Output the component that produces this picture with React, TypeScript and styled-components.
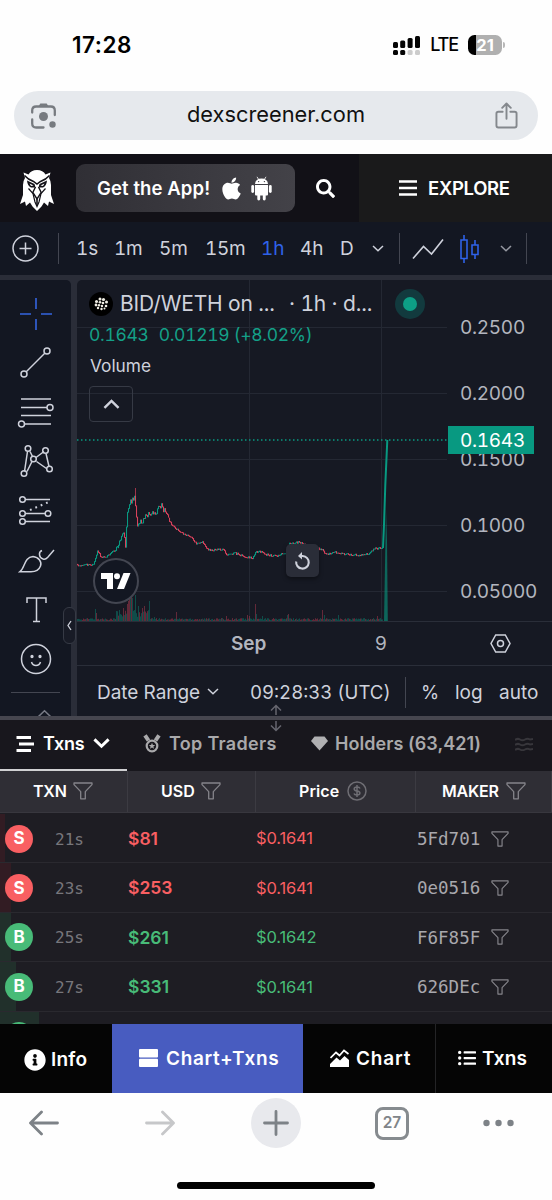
import React from "react";
import styled, { createGlobalStyle } from "styled-components";
import { FaApple, FaSearch, FaInfoCircle, FaListUl } from "react-icons/fa";

const ui = `Inter, "Liberation Sans", sans-serif`;

const GlobalStyle = createGlobalStyle`
  * { box-sizing: border-box; }
  body { margin: 0; background: #fff; font-family: ${ui}; }
  svg { display: block; flex: none; }
`;

const Phone = styled.div`
  width: 552px;
  height: 1200px;
  display: flex;
  flex-direction: column;
  overflow: hidden;
  background: #fefefe;
`;

/* ---------- text ---------- */
const Label = styled.span<{ $size: number; $weight?: number; $color?: string; $ls?: number }>`
  font-size: ${(p) => p.$size}px;
  font-weight: ${(p) => p.$weight ?? 400};
  color: ${(p) => p.$color ?? "#cfd2dc"};
  letter-spacing: ${(p) => p.$ls ?? 0}px;
  line-height: 1;
  white-space: nowrap;
`;
const Figure = styled(Label)`
  font-variant-numeric: tabular-nums;
`;
const PairName = styled(Figure)<{ $w: number }>`
  width: ${(p) => p.$w}px;
`;
const Mono = styled(Label)`
  font-family: "DejaVu Sans Mono", monospace;
  padding-top: 2px;
`;

/* ---------- phone status and address ---------- */
const StatusBar = styled.div`
  height: 91px;
  padding: 0 47px 1px 72px;
  display: flex;
  align-items: center;
  justify-content: space-between;
`;
const StatusRight = styled.div`
  display: flex;
  align-items: center;
  gap: 10px;
`;
const Battery = styled.div`
  width: 34px;
  height: 20px;
  border-radius: 6.5px;
  background: linear-gradient(90deg, #000 0 8px, #b0b0b0 8px);
  display: flex;
  align-items: center;
  justify-content: center;
`;
const BatteryGroup = styled.div`
  display: flex;
  align-items: center;
  gap: 1px;
`;
const Nub = styled.div`
  width: 2px;
  height: 6px;
  border-radius: 0 2px 2px 0;
  background: #b8b8b8;
`;
const AddressBar = styled.div`
  height: 49px;
  margin: 0 14px 14px;
  padding: 0 20px 1px 16px;
  border-radius: 25px;
  background: #e6e9ed;
  display: flex;
  align-items: center;
  justify-content: space-between;
`;

/* ---------- site header ---------- */
const SiteHeader = styled.header`
  height: 68px;
  display: flex;
  background: #121117;
  align-items: stretch;
`;
const LogoBox = styled.div`
  width: 76px;
  padding: 4px 0 0 20px;
  display: flex;
  align-items: center;
`;
const AppButton = styled.div`
  width: 219px;
  height: 48px;
  margin-top: 10px;
  padding-left: 21px;
  border-radius: 9px;
  background: linear-gradient(90deg, #302f35, #434248);
  display: flex;
  align-items: center;
`;
const Stores = styled.div`
  display: flex;
  align-items: center;
  gap: 7px;
  margin-left: 9px;
`;
const SearchBox = styled.div`
  width: 64px;
  display: flex;
  align-items: center;
  padding-left: 21px;
`;
const Explore = styled.div`
  flex: 1;
  background: #1a1a1b;
  display: flex;
  align-items: center;
  padding-left: 40px;
  gap: 11px;
`;

/* ---------- chart ---------- */
const ChartToolbar = styled.div`
  height: 53px;
  background: #131722;
  display: grid;
  align-items: center;
  grid-template-columns: 58px 18px 38px 45px 46px 56px 39px 40px 32px 27px 13px 48px 40px 26px 1fr;
`;
const VRule = styled.div<{ $h?: number }>`
  width: 1px;
  height: ${(p) => p.$h ?? 31}px;
  background: #434651;
`;
const Pad = styled.div`
  padding-left: 12px;
`;
const ChartArea = styled.div`
  height: 441px;
  padding-top: 5px;
  background: #2a2d38;
  display: flex;
  gap: 6px;
`;
const ToolColumn = styled.div`
  position: relative;
  width: 71px;
  padding-top: 9px;
  border-radius: 0 5px 0 0;
  background: #131722;
  display: flex;
  flex-direction: column;
  align-items: center;
`;
const ToolCell = styled.div`
  height: 49.4px;
  display: flex;
  align-items: center;
  flex: none;
`;
const ToolRule = styled.div`
  width: 49px;
  height: 1px;
  margin: 8px 0 16px;
  background: #434651;
  flex: none;
`;
const MoreTools = styled.div`
  padding-left: 18px;
  height: 7px;
  overflow: hidden;
`;
const DrawerHandle = styled.div`
  position: absolute;
  left: 63px;
  top: 327px;
  width: 13px;
  height: 37px;
  border: 1px solid #363a45;
  border-radius: 6px;
  background: #181b26;
  display: flex;
  align-items: center;
  justify-content: center;
`;
const ChartPanel = styled.div`
  width: 475px;
  border-radius: 5px 0 0 0;
  background: #161923;
  overflow: hidden;
`;
const Plot = styled.div`
  height: 342px;
  display: flex;
  border-bottom: 1px solid #2a2e39;
`;
const PlotCanvas = styled.div`
  position: relative;
  width: 370px;
  height: 341px;
`;
const Legend = styled.div`
  position: absolute;
  left: 0;
  top: 0;
  width: 370px;
  padding: 8px 0 0 12px;
`;
const LegendRow = styled.div<{ $h: number; $gap?: number; $pad?: number }>`
  display: flex;
  align-items: center;
  height: ${(p) => p.$h}px;
  gap: ${(p) => p.$gap ?? 0}px;
  padding-left: ${(p) => p.$pad ?? 0}px;
`;
const CollapseButton = styled.div`
  width: 44px;
  height: 36px;
  margin: 5px 0 0 0;
  border: 1px solid #363a45;
  border-radius: 4px;
  display: flex;
  align-items: center;
  justify-content: center;
`;
const TvBadge = styled.div`
  position: absolute;
  left: 16px;
  top: 278px;
  width: 46px;
  height: 46px;
  border: 2px solid #434651;
  border-radius: 50%;
  background: #131722;
  display: flex;
  align-items: center;
  justify-content: center;
`;
const ResetButton = styled.div`
  position: absolute;
  left: 209px;
  top: 264px;
  width: 33px;
  height: 33px;
  border-radius: 5px;
  background: #2a2d38;
  box-shadow: 0 2px 4px #0006;
  display: flex;
  align-items: center;
  justify-content: center;
`;
const PriceAxis = styled.div`
  position: relative;
  width: 105px;
  height: 340px;
  padding: 14px 0 0 13px;
`;
const PriceTick = styled.div`
  height: 66px;
  display: flex;
  align-items: center;
`;
const LastPrice = styled.div`
  position: absolute;
  left: 1px;
  top: 146px;
  width: 86px;
  height: 28px;
  padding-left: 12px;
  background: #089981;
  display: flex;
  align-items: center;
`;
const TimeAxis = styled.div`
  height: 44px;
  border-bottom: 1px solid #2a2e39;
  display: grid;
  grid-template-columns: 154px 144px 115px 1fr;
  align-items: center;
`;
const SepLabel = styled(Label)`
  grid-column: 2;
`;
const RangeRow = styled.div`
  height: 52px;
  display: grid;
  grid-template-columns: 110px 43px 155px 16px 34px 44px 1fr;
  align-items: center;
  padding-left: 20px;
`;
const Splitter = styled.div`
  position: relative;
  height: 4px;
  background: #46464f;
`;
const SplitGrip = styled.div`
  position: absolute;
  left: 269px;
  top: -12px;
  z-index: 2;
`;

/* ---------- transactions ---------- */
const TabRow = styled.div`
  height: 51px;
  background: #18171d;
  display: grid;
  grid-template-columns: 127px 184px 204px 1fr;
`;
const Tab = styled.div<{ $active?: boolean; $pad?: number; $gap: number }>`
  display: flex;
  align-items: center;
  gap: ${(p) => p.$gap}px;
  padding-left: ${(p) => p.$pad ?? 0}px;
  padding-bottom: ${(p) => (p.$active ? 2 : 4)}px;
  border-bottom: ${(p) => (p.$active ? "2px solid #d0d0d2" : "0")};
`;
const TableHead = styled.div`
  height: 42px;
  background: #2f2e35;
  border-bottom: 1px solid #38373e;
  display: grid;
  grid-template-columns: 128px 128px 160px 136px;
`;
const HeadCell = styled.div<{ $pad: number; $gap?: number }>`
  display: flex;
  align-items: center;
  gap: ${(p) => p.$gap ?? 6}px;
  padding-left: ${(p) => p.$pad}px;
  padding-bottom: 2px;
  border-right: 1px solid #3c3b42;
`;
const Rows = styled.div`
  height: 211px;
  padding-top: 1px;
  overflow: hidden;
  background: #1e1d23;
`;
const TxnRow = styled.div<{ $bar: number; $tint: string }>`
  height: 49.4px;
  border-bottom: 1px solid #2a292f;
  background: linear-gradient(${(p) => p.$tint}, ${(p) => p.$tint}) 0 0 / ${(p) => p.$bar}px 100% no-repeat;
  display: grid;
  grid-template-columns: 50px 73px 128px 161px 1fr;
  padding: 1px 0 0 5px;
  align-items: center;
`;
const Side = styled.div<{ $color: string }>`
  width: 28px;
  height: 28px;
  border-radius: 50%;
  background: ${(p) => p.$color};
  display: flex;
  align-items: center;
  justify-content: center;
`;
const Maker = styled.div`
  display: flex;
  align-items: center;
  gap: 11px;
`;

/* ---------- bottom bars ---------- */
const ViewTabs = styled.div`
  height: 68.5px;
  background: #050505;
  display: grid;
  grid-template-columns: 112px 191px 132px 1fr;
`;
const ViewTab = styled.div<{ $active?: boolean; $pad: number; $gap: number; $rule?: boolean; $top?: number }>`
  display: flex;
  align-items: center;
  gap: ${(p) => p.$gap}px;
  padding-left: ${(p) => p.$pad}px;
  padding-top: ${(p) => p.$top ?? 0}px;
  background: ${(p) => (p.$active ? "#485cc0" : "transparent")};
  border-left: ${(p) => (p.$rule ? "1px solid #242426" : "0")};
`;
const BrowserBar = styled.div`
  height: 61px;
  display: grid;
  grid-template-columns: 116px 106px 124px 108px 1fr;
  align-items: center;
  padding-left: 29px;
`;
const NewTab = styled.div`
  width: 50px;
  height: 50px;
  border-radius: 50%;
  background: #e8e9ed;
  display: flex;
  align-items: center;
  justify-content: center;
`;
const TabCount = styled.div`
  width: 34px;
  height: 33px;
  border: 3px solid #868b8f;
  border-radius: 8px;
  display: flex;
  align-items: center;
  justify-content: center;
`;
const HomeIndicator = styled.div`
  width: 198px;
  height: 7px;
  margin: 28.5px auto 0;
  border-radius: 4px;
  background: #000;
`;

/* ---------- drawings ---------- */
const Chevron = ({ w = 12, up = false, color = "#cfd2dc", sw = 1.5 }) => (
  <svg width={w} height={w * 0.6} viewBox="0 0 12 7.2" fill="none" stroke={color} strokeWidth={sw}>
    <path d={up ? "M1 6.2 6 1.4 11 6.2" : "M1 1 6 5.8 11 1"} />
  </svg>
);

const Funnel = ({ w = 20, color = "#85848a" }) => (
  <svg width={w} height={w * 0.9} viewBox="0 0 20 18" fill="none" stroke={color} strokeWidth="1.3" strokeLinejoin="round">
    <path d="M1 1H19V2.6L12.3 9.6V16.8H7.7V9.6L1 2.6Z" />
  </svg>
);

const EagleLogo = () => (
  <svg width="34" height="41" viewBox="0 0 34 41">
    <path
      fill="#fff"
      d="M3.500 2.500 8.500 4.500Q11 0 17 0 23 0 25.500 4.500L30.500 2.500 29 8Q31 11 31 15V25L34 34 29 31.500 28 36 24 32.500 21.500 36.500 17 41 12.500 36.500 10 32.500 6 36 5 31.500 0 34 3 25V15Q3 11 5 8Z"
    />
    <path
      d="M4.500 5.500Q8 9.500 13.500 11.500L17 14 20.500 11.500Q26 9.500 29.500 5.500"
      fill="none"
      stroke="#121117"
      strokeWidth="1.500"
    />
    <path d="M7 10.500 14.500 14 15.500 17.500 11 17.500Q7.500 16 7 10.500ZM27 10.500 19.500 14 18.500 17.500 23 17.500Q26.500 16 27 10.500Z" fill="#121117" />
    <path d="M9.500 13.500 13.500 15.500 11 16ZM24.500 13.500 20.500 15.500 23 16Z" fill="#fff" />
    <path d="M8.500 18.500 13 23.500 15 32 17 36.500 19 32 21 23.500 25.500 18.500" fill="none" stroke="#121117" strokeWidth="1.200" />
    <path d="M15.500 17 12.800 22.500 17 29 21.200 22.500 18.500 17" fill="none" stroke="#121117" strokeWidth="1.400" />
    <path d="M17 29V35" stroke="#121117" strokeWidth="1.600" />
  </svg>
);

const AndroidRobot = () => (
  <svg width="21" height="25" viewBox="0 0 21 25" fill="#fff">
    <path d="M4 8Q4.500 2.500 10.500 2.500T17 8ZM4 9H17V18.500Q17 19.500 16 19.500H5Q4 19.500 4 18.500Z" />
    <rect x="0.300" y="9" width="2.800" height="8" rx="1.400" />
    <rect x="17.900" y="9" width="2.800" height="8" rx="1.400" />
    <rect x="6.300" y="17" width="2.900" height="7.500" rx="1.400" />
    <rect x="11.800" y="17" width="2.900" height="7.500" rx="1.400" />
    <path d="M6 0.800 7.700 3.600M15 0.800 13.300 3.600" stroke="#fff" strokeWidth="0.800" />
    <circle cx="7.600" cy="5.600" r="0.700" fill="#3c3b41" />
    <circle cx="13.400" cy="5.600" r="0.700" fill="#3c3b41" />
  </svg>
);

const Medal = () => (
  <svg width="18" height="19" viewBox="0 0 18 19" fill="none" stroke="#a9a9ab">
    <path d="M2 1.300 5.500 6.500M16 1.300 12.500 6.500" strokeWidth="4" />
    <circle cx="9" cy="12" r="5.300" strokeWidth="2.200" fill="#18171d" />
    <path d="M9 8.800 9.900 11 12.200 11.100 10.400 12.600 11 14.800 9 13.500 7 14.800 7.600 12.600 5.800 11.100 8.100 11Z" fill="#a9a9ab" stroke="none" />
  </svg>
);

const Signal = () => (
  <svg width="27" height="20" viewBox="0 0 27 20" fill="#050505">
    <rect x="0" y="7" width="5" height="6" rx="1.5" />
    <rect x="7.200" y="5.500" width="5" height="7.500" rx="1.500" />
    <rect x="14.600" y="3" width="5" height="10" rx="1.500" />
    <rect x="22" y="1" width="5" height="12" rx="1.500" />
    <rect x="0" y="15" width="5" height="5" rx="1.500" />
    <rect x="7.200" y="15" width="5" height="5" rx="1.500" />
    <rect x="14.600" y="15" width="5" height="5" rx="1.500" fill="#ccc" />
    <rect x="22" y="15" width="5" height="5" rx="1.500" fill="#ccc" />
  </svg>
);

const Lens = () => (
  <svg width="27" height="27" viewBox="0 0 27 27" fill="none" stroke="#777b80" strokeWidth="2.300">
    <path d="M2.200 10.500V8.500Q2.200 4.500 6.200 4.500H20.800Q24.800 4.500 24.800 8.500V13M2.200 17.500V21.500Q2.200 25.500 6.200 25.500H13.500" strokeLinecap="round" />
    <path d="M8.500 4.500 10.300 1.500H16.700L18.500 4.500Z" fill="#777b80" stroke="none" />
    <circle cx="13.500" cy="14.500" r="4.500" fill="#777b80" stroke="none" />
    <circle cx="22.500" cy="22.500" r="3.200" fill="#777b80" stroke="none" />
  </svg>
);

const Share = () => (
  <svg width="23" height="27" viewBox="0 0 24 28" fill="none" stroke="#84888d" strokeWidth="2" strokeLinecap="round" strokeLinejoin="round">
    <path d="M8 10H3.500Q1.500 10 1.500 12V24.500Q1.500 26.500 3.500 26.500H20.500Q22.500 26.500 22.500 24.500V12Q22.500 10 20.500 10H16M12 17.500V2M7.500 6 12 1.500 16.500 6" />
  </svg>
);

const toolIcons: React.ReactNode[] = [
  <g stroke="#3565e0" strokeWidth="1.6">
    <path d="M2 18H13M23 18H34M18 2V13M18 23V34" />
  </g>,
  <g>
    <path d="M8 27 27 8" />
    <circle cx="6" cy="29" r="3" />
    <circle cx="29" cy="6" r="3" />
  </g>,
  <g>
    <path d="M3 5H33M3 13.500H29M3 21.500H33M7 30H33" />
    <circle cx="32" cy="13.500" r="3" />
    <circle cx="3.500" cy="30" r="3" />
  </g>,
  <g transform="translate(0 -1.500)">
    <path d="M6.500 29 9.500 9M12 9 14.500 14M9 29 14 19M18 15 26 9M18.500 19 28.500 26M28 11 31 24" />
    <circle cx="10" cy="6" r="2.800" />
    <circle cx="15.500" cy="16.500" r="2.800" />
    <circle cx="27.500" cy="8" r="2.800" />
    <circle cx="31.500" cy="26.500" r="2.800" />
    <circle cx="6" cy="31" r="2.800" />
  </g>,
  <g>
    <path d="M7 6.500H32M7 20.500H27M7 28.500H32" />
    <path d="M12 17 32 8.500" strokeDasharray="1.8 4" strokeWidth="2" />
    <circle cx="4.500" cy="6.500" r="2.800" />
    <circle cx="4.500" cy="20.500" r="2.800" />
    <circle cx="30" cy="20.500" r="2.800" />
    <circle cx="4.500" cy="28.500" r="2.800" />
  </g>,
  <g>
    <path d="M2 28.700C7 25 6 14 15 13.500 21 14 24 19 22.500 23 21 27 18 28.700 13 28.700ZM24 7.500C20 9 21 15 25 16 28 17 29 15 30 14L36 7" />
  </g>,
  <g>
    <path d="M9 11V6H28V11M18.500 6V29.500M15 29.500H22" />
  </g>,
  <g>
    <circle cx="18" cy="18" r="14.500" />
    <path d="M13.500 21Q14.500 24.500 18 24.500 21.500 24.500 22.500 21" />
    <circle cx="14" cy="15.500" r="0.900" fill="#cfd2dc" />
    <circle cx="22" cy="15.500" r="0.900" fill="#cfd2dc" />
  </g>,
];

const anchors: [number, number][] = [
  [0, 285], [8, 285], [17, 284], [21, 271], [25, 277], [29, 277], [39, 270], [43, 261], [47, 251], [49, 265], [51, 232],
  [54, 222], [58, 216], [61, 244], [68, 238], [75, 232], [79, 232], [84, 225], [89, 231], [91, 236], [95, 245], [103, 251],
  [108, 254], [115, 257], [120, 264], [126, 262], [131, 269], [137, 270], [147, 269], [151, 275], [159, 273], [167, 276],
  [176, 278], [179, 272], [185, 271], [189, 274], [199, 276], [205, 274], [209, 273], [213, 263], [223, 262], [233, 267],
  [245, 269], [250, 274], [258, 272], [268, 274], [283, 275], [293, 273], [299, 268], [306, 268], [307, 240], [309, 205],
  [310, 160],
];
const UP = "#089981";
const DOWN = "#d8415b";

const noise = (n: number) => {
  const v = Math.sin(n * 127.1) * 43758.5453;
  return v - Math.floor(v);
};
const priceAt = (x: number) => {
  for (let i = 1; i < anchors.length; i++) {
    const [x1, y1] = anchors[i];
    const [x0, y0] = anchors[i - 1];
    if (x <= x1) return y0 + ((y1 - y0) * (x - x0)) / (x1 - x0);
  }
  return 160;
};
const candles = Array.from({ length: 306 }, (_, i) => {
  const wide = i > 40 && i < 92 ? 6 : 2;
  const jitter = (k: number) => (noise(k) - 0.5) * wide;
  const open = priceAt(i) + jitter(i);
  const close = priceAt(i + 1) + (i < 305 ? jitter(i + 1) : 0);
  return { x: i, open, close, up: close < open };
});
const spikes: Record<number, number> = {
  18: 12, 19: 8, 39: 10, 42: 11, 46: 13, 50: 17, 51: 20, 52: 28, 53: 26, 54: 25, 55: 23, 58: 26, 61: 15, 65: 13, 67: 15,
  72: 20, 77: 4, 99: 9, 149: 5, 170: 6, 172: 5, 178: 17, 179: 7, 185: 5, 210: 6, 211: 7, 245: 11, 247: 6, 261: 6, 300: 5,
};
const volumeAt = (i: number) => spikes[i] ?? (i > 38 && i < 72 ? 4 + noise(i + 9) * 7 : 1 + noise(i + 5) * 2);

const PriceChart = () => (
  <svg width="370" height="341" viewBox="0 0 370 341">
    <g stroke="#242833" strokeWidth="1">
      {[47.5, 113.5, 179.5, 245.5, 311.5].map((y) => (
        <path key={y} d={`M0 ${y}H370`} />
      ))}
      <path d="M172.500 0V341M304.500 0V341" />
    </g>
    {candles.map((_, i) => (
      <rect key={i} x={i} y={341 - volumeAt(i)} width="1" height={volumeAt(i)} fill={noise(i + 2) > 0.45 ? UP : DOWN} opacity="0.4" />
    ))}
    <path d="M307 341 308 285 309 230 310 260 310.800 341Z" fill={UP} opacity="0.6" />
    {candles.map((c, i) => (
      <rect
        key={i}
        x={c.x}
        y={Math.min(c.open, c.close) - 0.1}
        width="1.050"
        height={Math.abs(c.open - c.close) + 0.8}
        fill={c.up ? UP : DOWN}
      />
    ))}
    <path d="M58.500 208V222" stroke={DOWN} opacity=".7" />
    <path d="M306 268 307 245 308.300 205 310.300 160" stroke={UP} strokeWidth="2" fill="none" />
    <path d="M0 160H370" stroke={UP} strokeWidth="1.300" strokeDasharray="1.500 2.500" />
  </svg>
);

const TokenBadge = () => (
  <svg width="24" height="24" viewBox="0 0 24 24">
    <circle cx="12" cy="12" r="12" fill="#000" />
    <g fill="#f0eee4">
      <circle cx="11" cy="7" r="1.500" /><circle cx="14.500" cy="7.500" r="1.600" /><circle cx="7.500" cy="9.500" r="1.500" />
      <circle cx="11" cy="10.300" r="1.300" /><circle cx="14" cy="11" r="1.300" /><circle cx="17.500" cy="10" r="1.500" />
      <circle cx="7" cy="13" r="1.400" /><circle cx="10" cy="13.300" r="1.200" /><circle cx="13" cy="14" r="1.200" />
      <circle cx="17" cy="14" r="1.300" /><circle cx="9" cy="16" r="1.200" /><circle cx="12.500" cy="17" r="1.200" />
      <circle cx="15.500" cy="16.500" r="1" />
    </g>
  </svg>
);

const LiveDot = () => (
  <svg width="30" height="30" viewBox="0 0 30 30">
    <circle cx="15" cy="15" r="15" fill="#123a3e" />
    <circle cx="15" cy="15" r="7" fill="#0d9f86" />
  </svg>
);

const TvMark = () => (
  <svg width="30" height="16" viewBox="0 0 30 16" fill="#fff">
    <path d="M0 0H12V16H6V6H0Z" />
    <circle cx="16" cy="3.200" r="3" />
    <path d="M22.500 0H29.500L23 16H16Z" />
  </svg>
);

const txns = [
  { buy: false, age: "21s", usd: "$81", price: "$0.1641", maker: "5Fd701", bar: 5 },
  { buy: false, age: "23s", usd: "$253", price: "$0.1641", maker: "0e0516", bar: 11 },
  { buy: true, age: "25s", usd: "$261", price: "$0.1642", maker: "F6F85F", bar: 11 },
  { buy: true, age: "27s", usd: "$331", price: "$0.1641", maker: "626DEc", bar: 16 },
];

const RED = "#f95f62";
const GREEN = "#48bb78";
const RED_TINT = "#321c23";
const GREEN_TINT = "#21302b";

export default function App() {
  return (
    <Phone>
      <GlobalStyle />
      <StatusBar>
        <Label $size={22.5} $weight={600} $color="#000" $ls={0.5}>17:28</Label>
        <StatusRight>
          <Signal />
          <Label $size={18} $weight={500} $color="#000" $ls={-1.1}>LTE</Label>
          <BatteryGroup>
            <Battery><Label $size={16.5} $weight={700} $color="#fff">21</Label></Battery>
            <Nub />
          </BatteryGroup>
        </StatusRight>
      </StatusBar>
      <AddressBar>
        <Lens />
        <Label $size={21.8} $color="#111">dexscreener.com</Label>
        <Share />
      </AddressBar>

      <SiteHeader>
        <LogoBox><EagleLogo /></LogoBox>
        <AppButton>
          <Label $size={18.5} $weight={600} $color="#fff" $ls={0.1}>Get the App!</Label>
          <Stores>
            <FaApple size={25} color="#fff" />
            <AndroidRobot />
          </Stores>
        </AppButton>
        <SearchBox><FaSearch size={19} color="#fff" /></SearchBox>
        <Explore>
          <svg width="18" height="16" viewBox="0 0 18 16" stroke="#fff" strokeWidth="2.400">
            <path d="M0 1.500H18M0 8H18M0 14.500H18" />
          </svg>
          <Label $size={18.5} $weight={600} $color="#fff" $ls={-0.3}>EXPLORE</Label>
        </Explore>
      </SiteHeader>

      <ChartToolbar>
        <Pad>
          <svg width="27" height="27" viewBox="0 0 27 27" fill="none" stroke="#cfd2dc" strokeWidth="1.500">
            <circle cx="13.500" cy="13.500" r="12.500" />
            <path d="M7.500 13.500H19.500M13.500 7.500V19.500" />
          </svg>
        </Pad>
        <VRule />
        <Figure $size={19} $ls={-0.15}>1s</Figure>
        <Figure $size={19} $ls={-0.3}>1m</Figure>
        <Figure $size={19} $ls={-0.15}>5m</Figure>
        <Figure $size={19} $ls={-0.3}>15m</Figure>
        <Figure $size={19} $ls={-0.15} $color="#2f62e8">1h</Figure>
        <Figure $size={19} $ls={-0.15}>4h</Figure>
        <Figure $size={19}>D</Figure>
        <Chevron />
        <VRule />
        <svg width="32" height="22" viewBox="0 0 32 22" fill="none" stroke="#cfd2dc" strokeWidth="1.600">
          <path d="M1 20.500 11.500 8.500 19.500 16 31 1.500" />
        </svg>
        <svg width="20" height="28" viewBox="0 0 20 28" fill="none" stroke="#2f62e8" strokeWidth="1.600">
          <path d="M1 5H7V23.500H1ZM4 0V5M4 23.500V28M12 10H18V19.500H12ZM15 5V10M15 19.500V24" />
        </svg>
        <Chevron color="#9598a1" />
        <VRule />
      </ChartToolbar>

      <ChartArea>
        <ToolColumn>
          {toolIcons.map((icon, i) => (
            <ToolCell key={i}>
              <svg width="36" height="36" viewBox="0 0 36 36" fill="none" stroke="#cfd2dc" strokeWidth="1.500" overflow="visible">
                {icon}
              </svg>
            </ToolCell>
          ))}
          <ToolRule />
          <MoreTools><Chevron up w={15} color="#787b86" sw={1.2} /></MoreTools>
          <DrawerHandle>
            <svg width="5" height="11" viewBox="0 0 5 11" fill="none" stroke="#cfd2dc" strokeWidth="1.300">
              <path d="M4 1 1 5.500 4 10" />
            </svg>
          </DrawerHandle>
        </ToolColumn>
        <ChartPanel>
          <Plot>
            <PlotCanvas>
              <PriceChart />
              <Legend>
                <LegendRow $h={31} $gap={7}>
                  <TokenBadge />
                  <PairName $w={162} $size={21} $ls={-0.15}>BID/WETH on ...</PairName>
                  <PairName $w={99} $size={21} $ls={-0.15}>· 1h · d...</PairName>
                  <LiveDot />
                </LegendRow>
                <LegendRow $h={31} $gap={10}>
                  <Figure $size={17.5} $color="#14a088" $ls={-0.3}>0.1643</Figure>
                  <Figure $size={17.5} $color="#14a088" $ls={-0.3}>0.01219 (+8.02%)</Figure>
                </LegendRow>
                <LegendRow $h={31} $pad={1}><Label $size={17.3}>Volume</Label></LegendRow>
                <CollapseButton><Chevron up w={17} sw={1.7} /></CollapseButton>
              </Legend>
              <TvBadge><TvMark /></TvBadge>
              <ResetButton>
                <svg width="18" height="19" viewBox="0 0 18 19" fill="none" stroke="#cfd2dc" strokeWidth="2.100">
                  <path d="M2.200 10.500A6.300 6.300 0 1 0 8.700 5H5" />
                  <path d="M8 1 4 5 8 8.500Z" fill="#cfd2dc" stroke="none" />
                </svg>
              </ResetButton>
            </PlotCanvas>
            <PriceAxis>
              {["0.2500", "0.2000", "0.1500", "0.1000", "0.05000"].map((t) => (
                <PriceTick key={t}><Figure $size={19} $color="#b2b5be" $ls={-0.3}>{t}</Figure></PriceTick>
              ))}
              <LastPrice><Figure $size={19} $color="#fff" $ls={-0.3}>0.1643</Figure></LastPrice>
            </PriceAxis>
          </Plot>
          <TimeAxis>
            <SepLabel $size={19} $weight={600} $color="#b2b5be">Sep</SepLabel>
            <Label $size={19} $color="#b2b5be">9</Label>
            <svg width="21" height="19" viewBox="0 0 21 19" fill="none" stroke="#cfd2dc" strokeWidth="1.500">
              <path d="M5.700 1H15.300L20 9.500 15.300 18H5.700L1 9.500Z" />
              <circle cx="10.500" cy="9.500" r="3" />
            </svg>
          </TimeAxis>
          <RangeRow>
            <Label $size={19} $ls={-0.05}>Date Range</Label>
            <Chevron />
            <Figure $size={18.6}>09:28:33 (UTC)</Figure>
            <VRule />
            <Label $size={18.5}>%</Label>
            <Label $size={19}>log</Label>
            <Label $size={19}>auto</Label>
          </RangeRow>
        </ChartPanel>
      </ChartArea>

      <Splitter>
        <SplitGrip>
          <svg width="14" height="28" viewBox="0 0 14 28" fill="none" stroke="#66666f" strokeWidth="1.500">
            <path d="M7 11V2M2 6.500 7 1.500 12 6.500M7 17V26M2 21.500 7 26.500 12 21.500" />
          </svg>
        </SplitGrip>
      </Splitter>

      <TabRow>
        <Tab $active $pad={16} $gap={9}>
          <svg width="18" height="16" viewBox="0 0 18 16" stroke="#fff" strokeWidth="3">
            <path d="M0.500 1.500H15M3 8H18M0.500 14.500H15" />
          </svg>
          <Label $size={18} $weight={600} $color="#fff" $ls={-0.2}>Txns</Label>
          <Chevron w={17} color="#fff" sw={2.1} />
        </Tab>
        <Tab $pad={16} $gap={8}>
          <Medal />
          <Label $size={18} $weight={600} $color="#a9a9ab" $ls={0.3}>Top Traders</Label>
        </Tab>
        <Tab $gap={7}>
          <svg width="17" height="15" viewBox="0 0 17 15" fill="#b0b0b2">
            <path d="M3.500 0.500H13.500L17 5 8.500 14.500 0 5Z" />
          </svg>
          <Label $size={18} $weight={600} $color="#a9a9ab" $ls={0.05}>Holders (63,421)</Label>
        </Tab>
        <Tab $gap={0}>
          <svg width="18" height="14" viewBox="0 0 18 14" fill="none" stroke="#37363b" strokeWidth="2">
            <path d="M0 3Q2.500 1 5 2.500T10 2.500 15 2.500L18 2M0 8Q2.500 6 5 7.500T10 7.500 15 7.500L18 7M0 13Q2.500 11 5 12.500T10 12.500 15 12.500L18 12" />
          </svg>
        </Tab>
      </TabRow>

      <TableHead>
        <HeadCell $pad={33}><Label $size={16} $weight={600} $color="#fff" $ls={-0.2}>TXN</Label><Funnel /></HeadCell>
        <HeadCell $pad={33}><Label $size={16} $weight={600} $color="#fff">USD</Label><Funnel /></HeadCell>
        <HeadCell $pad={43} $gap={8}>
          <Label $size={16} $weight={600} $color="#fff" $ls={0.1}>Price</Label>
          <svg width="20" height="20" viewBox="0 0 20 20" fill="none" stroke="#6f6e74" strokeWidth="1.500">
            <circle cx="10" cy="10" r="9" />
            <path d="M13 7.500Q12.500 6 10 6 7.200 6 7.200 8 7.200 9.600 10 10 12.900 10.400 12.900 12 12.900 14 10 14 7.500 14 7 12.500M10 4V16" />
          </svg>
        </HeadCell>
        <HeadCell $pad={26} $gap={7}><Label $size={16} $weight={600} $color="#fff" $ls={-0.2}>MAKER</Label><Funnel /></HeadCell>
      </TableHead>
      <Rows>
        {txns.map((t) => (
          <TxnRow key={t.maker} $bar={t.bar} $tint={t.buy ? GREEN_TINT : RED_TINT}>
            <Side $color={t.buy ? GREEN : RED}>
              <Label $size={17} $weight={700} $color="#fff">{t.buy ? "B" : "S"}</Label>
            </Side>
            <Mono $size={16} $color="#77767b">{t.age}</Mono>
            <Label $size={17.5} $weight={600} $color={t.buy ? GREEN : RED}>{t.usd}</Label>
            <Label $size={16.5} $color={t.buy ? GREEN : RED} $ls={-0.15}>{t.price}</Label>
            <Maker>
              <Mono $size={17.5} $color="#a9a8ad">{t.maker}</Mono>
              <Funnel w={18} />
            </Maker>
          </TxnRow>
        ))}
        <TxnRow $bar={39} $tint={GREEN_TINT}>
          <Side $color={GREEN} />
        </TxnRow>
      </Rows>

      <ViewTabs>
        <ViewTab $pad={24} $gap={5} $top={3}>
          <FaInfoCircle size={22} color="#fff" />
          <Label $size={19} $weight={600} $color="#fff" $ls={0.2}>Info</Label>
        </ViewTab>
        <ViewTab $active $pad={27} $gap={8}>
          <svg width="19" height="18" viewBox="0 0 19 18" fill="#fff">
            <rect width="19" height="8.500" rx="1" />
            <rect y="9.700" width="19" height="8.300" rx="1" />
          </svg>
          <Label $size={19} $weight={600} $color="#fff" $ls={0.65}>Chart+Txns</Label>
        </ViewTab>
        <ViewTab $pad={27} $gap={7}>
          <svg width="19" height="18" viewBox="0 0 19 18" fill="#fff">
            <path d="M0.500 9 6 3.500 9.500 6.500 14 1.500 18.500 5" fill="none" stroke="#fff" strokeWidth="1.700" />
            <path d="M0 15 6.500 8.500 10 11.500 14.500 7 19 11V18H0Z" />
          </svg>
          <Label $size={19} $weight={600} $color="#fff" $ls={0.8}>Chart</Label>
        </ViewTab>
        <ViewTab $rule $pad={22} $gap={6}>
          <FaListUl size={18} color="#fff" />
          <Label $size={19} $weight={600} $color="#fff" $ls={0.1}>Txns</Label>
        </ViewTab>
      </ViewTabs>

      <BrowserBar>
        <svg width="30" height="26" viewBox="0 0 30 26" fill="none" stroke="#7d8287" strokeWidth="2.800" strokeLinecap="round" strokeLinejoin="round">
          <path d="M28.500 13H2M12.500 2 1.500 13 12.500 24" />
        </svg>
        <svg width="30" height="26" viewBox="0 0 30 26" fill="none" stroke="#c6c7c9" strokeWidth="2.800" strokeLinecap="round" strokeLinejoin="round">
          <path d="M1.500 13H28M17.500 2 28.500 13 17.500 24" />
        </svg>
        <NewTab>
          <svg width="26" height="26" viewBox="0 0 26 26" stroke="#7d8287" strokeWidth="2.800" strokeLinecap="round">
            <path d="M1.500 13H24.500M13 1.500V24.500" />
          </svg>
        </NewTab>
        <TabCount><Label $size={15.5} $weight={600} $color="#808589">27</Label></TabCount>
        <svg width="32" height="8" viewBox="0 0 32 8" fill="#7d8287">
          <circle cx="3.500" cy="4" r="3.200" /><circle cx="15.500" cy="4" r="3.200" /><circle cx="27.500" cy="4" r="3.200" />
        </svg>
      </BrowserBar>
      <HomeIndicator />
    </Phone>
  );
}
